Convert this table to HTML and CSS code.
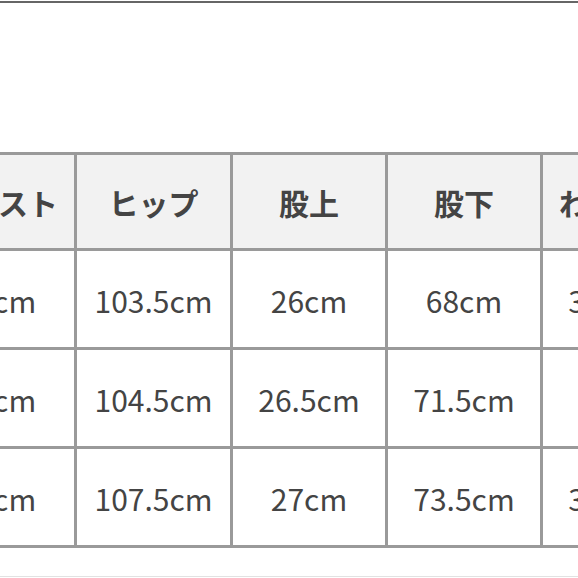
FILE: index.html
```html
<!DOCTYPE html>
<html lang="ja">
<head>
<meta charset="utf-8">
<link rel="stylesheet" href="styles.css">
</head>
<body>
<div class="topbar"></div>
<div class="wrap">
  <div class="grid">
    <div class="cell head">ウエスト</div>
    <div class="cell head">ヒップ</div>
    <div class="cell head">股上</div>
    <div class="cell head">股下</div>
    <div class="cell head">わたり幅</div>

    <div class="cell">76cm</div>
    <div class="cell">103.5cm</div>
    <div class="cell">26cm</div>
    <div class="cell">68cm</div>
    <div class="cell">32.5cm</div>

    <div class="cell">80cm</div>
    <div class="cell">104.5cm</div>
    <div class="cell">26.5cm</div>
    <div class="cell">71.5cm</div>
    <div class="cell">33cm</div>

    <div class="cell">84cm</div>
    <div class="cell">107.5cm</div>
    <div class="cell">27cm</div>
    <div class="cell">73.5cm</div>
    <div class="cell">34.5cm</div>
  </div>
</div>
<div class="bottomline"></div>
</body>
</html>
```

FILE: styles.css
```css
html, body {
  margin: 0;
  padding: 0;
  background: #ffffff;
}
body {
  width: 578px;
  height: 578px;
  overflow: hidden;
  font-family: "Noto Sans CJK JP", "Noto Sans", sans-serif;
  color: #444444;
}
.topbar {
  margin-top: 1px;
  height: 2px;
  background: #666666;
}
.wrap {
  margin-top: 149px;
  width: 578px;
  overflow: hidden;
}
.grid {
  display: grid;
  grid-template-columns: 155px 156px 155px 155px 155px;
  grid-template-rows: 96px 99px 99px 99px;
  width: max-content;
  margin-left: -81px;
  border-top: 3px solid #9a9a9a;
  border-left: 3px solid #9a9a9a;
}
.cell {
  box-sizing: border-box;
  border-right: 3px solid #9a9a9a;
  border-bottom: 3px solid #9a9a9a;
  display: flex;
  align-items: center;
  justify-content: center;
  font-size: 30px;
  line-height: 1.2;
  padding-top: 2px;
  white-space: nowrap;
  overflow: hidden;
}
.head {
  background: #f2f2f2;
  font-weight: 700;
  padding-top: 0;
}
.bottomline {
  margin-top: 28px;
  height: 1px;
  background: #e2e2e2;
}
```
